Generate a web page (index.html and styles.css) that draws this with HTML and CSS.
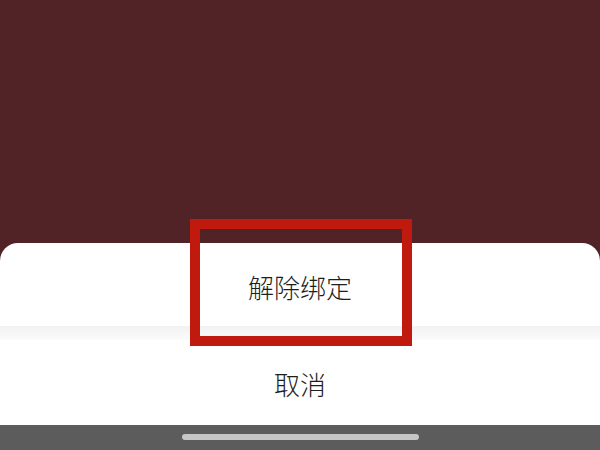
FILE: index.html
```html
<!DOCTYPE html>
<html lang="zh-CN">
<head>
<meta charset="utf-8">
<link rel="stylesheet" href="styles.css">
</head>
<body>
<div class="screen">
  <div class="backdrop"></div>
  <div class="sheet">
    <div class="item item-unbind">解除绑定</div>
    <div class="separator"></div>
    <div class="item item-cancel">取消</div>
  </div>
  <div class="navbar"><div class="home-indicator"></div></div>
  <div class="highlight"></div>
</div>
</body>
</html>
```
FILE: styles.css
```css
html, body {
  margin: 0;
  padding: 0;
}
body {
  width: 600px;
  height: 450px;
  overflow: hidden;
  background: #512226;
  font-family: "Noto Sans CJK SC", "Noto Sans", sans-serif;
}
.screen {
  position: relative;
  width: 600px;
  height: 450px;
  display: flex;
  flex-direction: column;
}
.backdrop {
  height: 243px;
  flex: none;
}
.sheet {
  flex: none;
  background: #ffffff;
  border-radius: 18px 18px 0 0;
  display: flex;
  flex-direction: column;
}
.item {
  display: flex;
  align-items: center;
  justify-content: center;
  color: #1e1e1e;
  font-size: 26px;
  font-weight: 300;
  line-height: 1;
}
.item-unbind {
  height: 83px;
  padding-top: 4px;
  box-sizing: border-box;
}
.separator {
  height: 14px;
  background: linear-gradient(#f2f2f2, #f7f7f7 60%, #fbfbfb);
}
.item-cancel {
  height: 85px;
  padding-top: 2px;
  box-sizing: border-box;
}
.navbar {
  flex: 1;
  background: #5c5c5c;
  display: flex;
  justify-content: center;
  padding-top: 9px;
  box-sizing: border-box;
}
.home-indicator {
  width: 237px;
  height: 6px;
  border-radius: 3px;
  background: #c6c6c6;
}
.highlight {
  position: absolute;
  left: 190px;
  top: 219px;
  width: 202px;
  height: 107px;
  border: 10px solid #c0190e;
}
```
